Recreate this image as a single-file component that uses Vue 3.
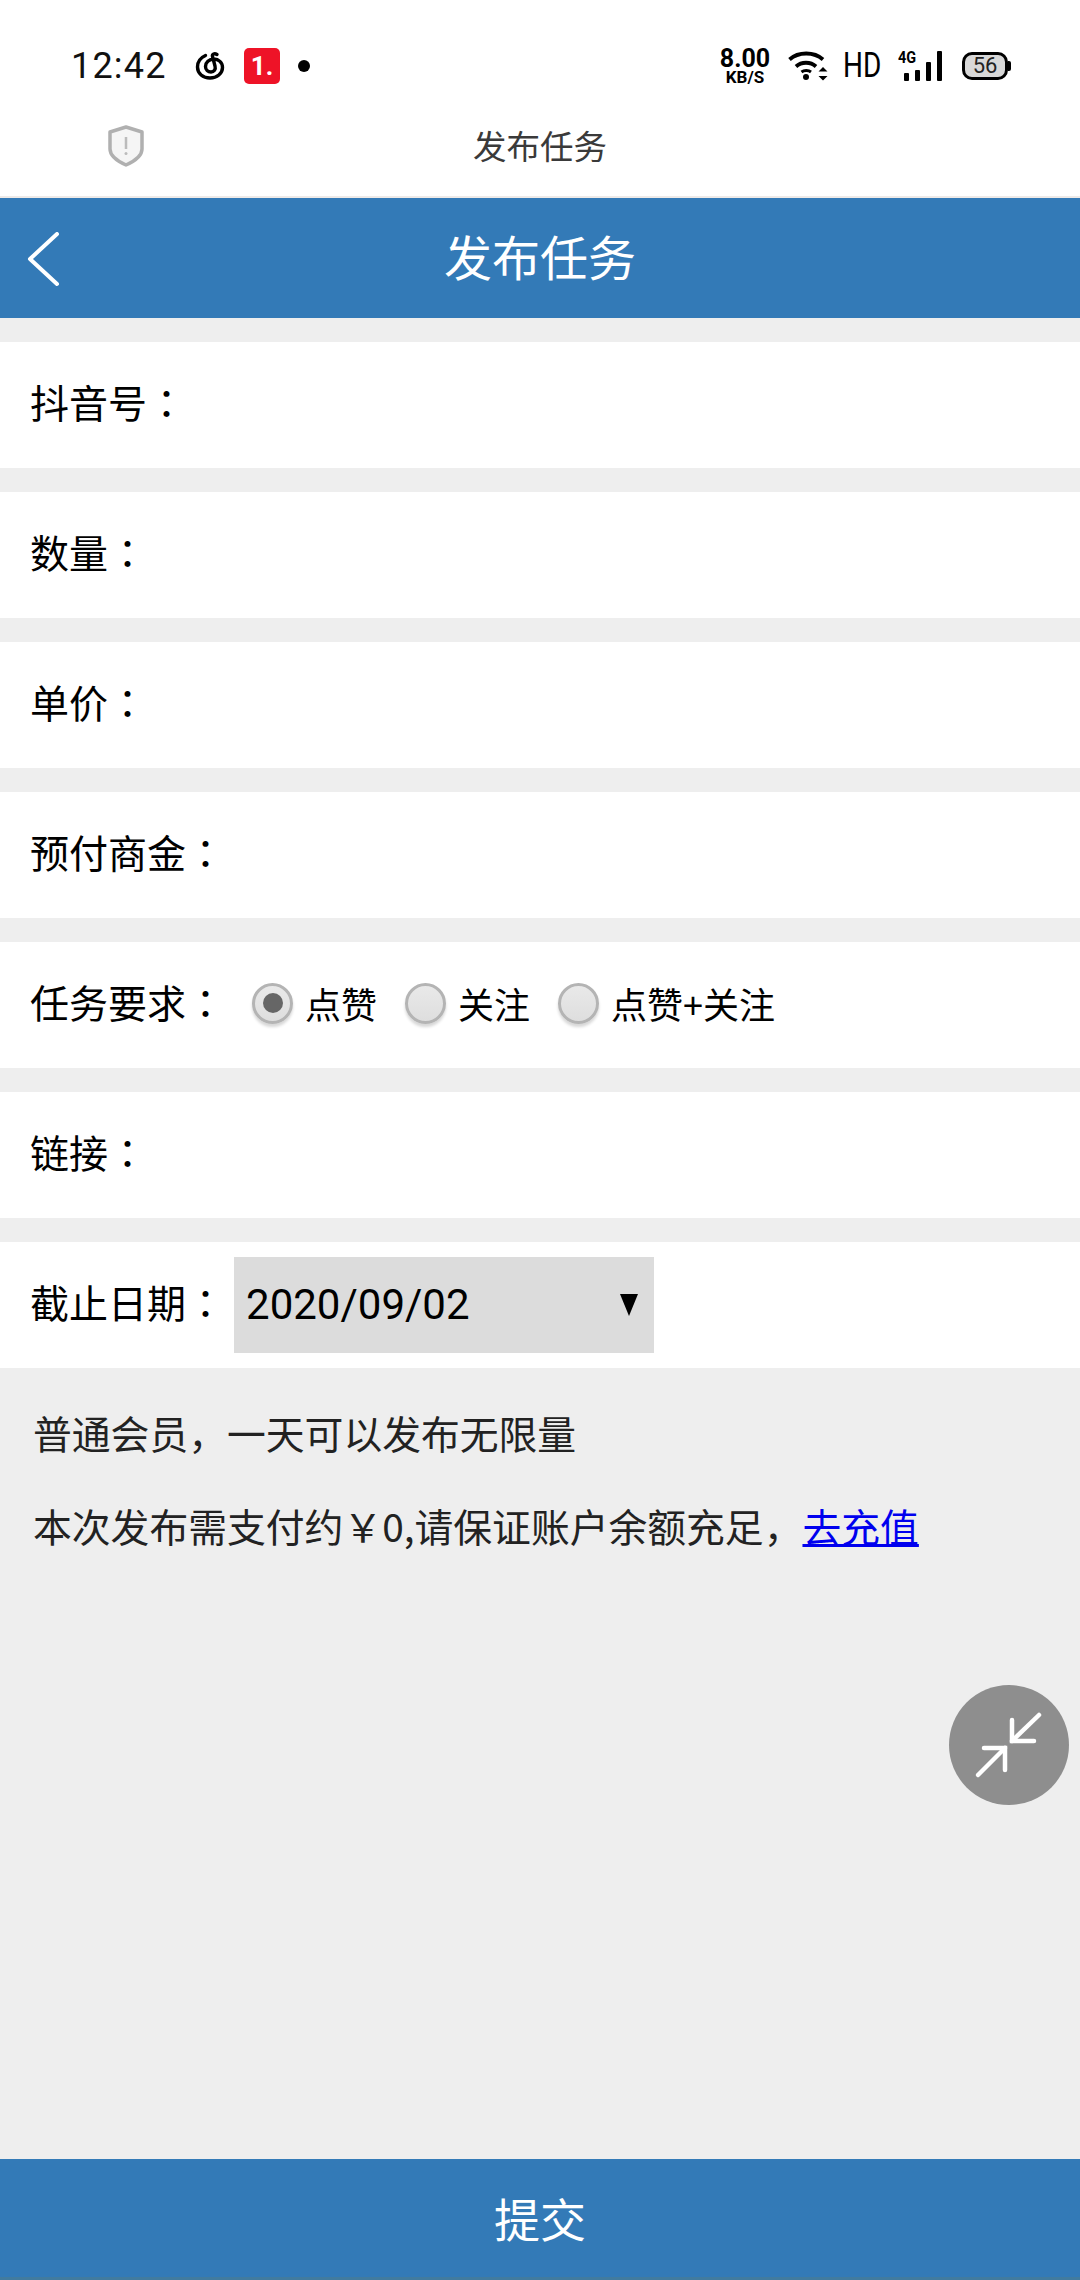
<script setup>
const rowsTop = ['抖音号', '数量', '单价', '预付商金']
const options = [
  { text: '点赞', checked: true },
  { text: '关注', checked: false },
  { text: '点赞+关注', checked: false },
]
</script>

<template>
  <div class="page">
    <div class="status">
      <div class="status-left">
        <span class="time">12:42</span>
        <svg class="note" width="30" height="30" viewBox="0 0 30 30" fill="none" stroke="#000" stroke-width="3.4" stroke-linecap="round">
          <path d="M10.5 4.5C6 6.5 2.5 10.5 2.5 16c0 6.5 5.5 11 12.5 11s12.5-4.500 12.500-10.500c0-5-4-8.500-8.500-8.500-5 0-8.500 3.500-8.500 7.500 0 3.500 2.500 5.500 5.500 5.500s5-2.500 4-6L17.500 5.500c-.6-2.500 2-3.500 4.500-2"/>
        </svg>
        <span class="badge">1.</span>
        <span class="dot"></span>
      </div>
      <div class="status-right">
        <div class="speed"><b>8.00</b><b class="unit">KB/S</b></div>
        <svg class="wifi" width="40" height="30" viewBox="0 0 40 30" fill="none" stroke="#000" stroke-width="3.800">
          <path d="M1.500 8.500C10.500 .5 26 .5 35 8.500"/>
          <path d="M8 15.500C13.500 10.500 22.500 10.500 28 15.500"/>
          <path d="M13.500 21C16 19 20.500 19 23 21" stroke-width="3"/>
          <circle cx="18" cy="26" r="3" fill="#000" stroke="none"/>
          <path d="M30.500 20.500l4.500-4.500 4.500 4.500zM30.500 25h9L35 29.500z" fill="#000" stroke="none"/>
        </svg>
        <span class="hd">HD</span>
        <div class="signal">
          <span class="four-g">4G</span>
          <i class="bar b1"></i><i class="bar b2"></i><i class="bar b3"></i><i class="bar b4"></i>
        </div>
        <div class="battery">
          <span class="battery-num">56</span>
          <i class="battery-tip"></i>
        </div>
      </div>
    </div>

    <div class="webbar">
      <svg class="shield" width="38" height="42" viewBox="0 0 38 42">
        <path d="M19 2l16 5v17c0 7-7 12-16 16C10 36 3 31 3 24V7z" fill="#f5f5f5" stroke="#b0b0b0" stroke-width="3.500" stroke-linejoin="round"/>
        <path d="M19 12v12" stroke="#bbb" stroke-width="2.500"/>
        <circle cx="19" cy="28.500" r="1.500" fill="#bbb"/>
      </svg>
      <span class="webtitle">发布任务</span>
    </div>

    <header class="header">
      <svg class="back" width="36" height="56" viewBox="0 0 36 56" fill="none" stroke="#fff" stroke-width="4" stroke-linecap="round" stroke-linejoin="round">
        <path d="M30 2L3 27l27 25"/>
      </svg>
      <span class="header-title">发布任务</span>
    </header>

    <main class="content">
      <div class="rows">
        <div v-for="row in rowsTop" :key="row" class="row">
          <span class="label">{{ row }}<span class="colon">：</span></span>
        </div>
        <div class="row">
          <span class="label">任务要求<span class="colon">：</span></span>
          <div class="options">
            <div v-for="opt in options" :key="opt.text" class="option">
              <span class="radio" :class="{ checked: opt.checked }"></span>
              <span class="opt-text">{{ opt.text }}</span>
            </div>
          </div>
        </div>
        <div class="row">
          <span class="label">链接<span class="colon">：</span></span>
        </div>
        <div class="row">
          <span class="label">截止日期<span class="colon">：</span></span>
          <div class="select">
            <span class="select-value">2020/09/02</span>
            <span class="select-arrow"></span>
          </div>
        </div>
      </div>

      <div class="info">
        <p>普通会员，一天可以发布无限量</p>
        <p>本次发布需支付约￥0,请保证账户余额充足，<a href="#" class="recharge">去充值</a></p>
      </div>

      <button class="fab" type="button" aria-label="收起">
        <svg width="120" height="120" viewBox="0 0 120 120" fill="none" stroke="#fff" stroke-width="4.500" stroke-linecap="round">
          <path d="M90 30L63 56"/>
          <path d="M63 35v21h22"/>
          <path d="M29 90l27-27"/>
          <path d="M35 63h21v22"/>
        </svg>
      </button>
    </main>

    <button class="submit" type="button"><span class="submit-text">提交</span></button>
  </div>
</template>

<style>
html, body { margin: 0; padding: 0; }
</style>

<style scoped>
.page {
  position: relative;
  width: 1080px;
  height: 2280px;
  display: flex;
  flex-direction: column;
  background: #fff;
  overflow: hidden;
  font-family: "Noto Sans CJK SC", "Noto Sans", sans-serif;
  color: #000;
}
.status {
  height: 124px;
  flex: none;
  display: flex;
  justify-content: space-between;
  align-items: flex-start;
  padding: 43px 72px 0 71px;
  box-sizing: border-box;
}
.status-left { display: flex; align-items: center; height: 46px; }
.time { font: 36px/46px Roboto, sans-serif; letter-spacing: 1.200px; color: #111; width: 124px; }
.badge {
  width: 36px; height: 36px; margin-left: 19px; border-radius: 5px; background: #ee1327; color: #fff;
  font: 700 26px/36px Roboto, sans-serif; text-align: center;
}
.dot { width: 12px; height: 12px; margin-left: 18px; border-radius: 50%; background: #000; }
.status-right { display: flex; align-items: center; height: 46px; }
.speed { display: flex; flex-direction: column; align-items: center; width: 50px; font-family: Roboto, sans-serif; }
.speed b { font-size: 25px; font-weight: 700; line-height: 23px; }
.speed .unit { font-size: 17px; line-height: 15px; }
.wifi { margin-left: 18px; flex: none; }
.hd { margin-left: 15px; width: 38px; font: 400 35px/46px Roboto, sans-serif; transform: scaleX(.8); transform-origin: left center; }
.signal { position: relative; width: 44px; height: 30px; margin-left: 17px; display: flex; align-items: flex-end; gap: 6px; padding-left: 6px; box-sizing: border-box; }
.four-g { position: absolute; left: 0; top: -1px; font: 700 17px/15px Roboto, sans-serif; transform: scaleX(.85); transform-origin: left center; }
.bar { display: block; width: 5px; flex: none; background: #000; border-radius: 1px; }
.b1 { height: 8px; } .b2 { height: 11px; } .b3 { height: 19px; } .b4 { height: 30px; }
.battery {
  position: relative; width: 46px; height: 28px; margin-left: 20px; box-sizing: border-box; border: 3px solid #000; border-radius: 10px; background: #d8d8d8;
  display: flex; align-items: center; justify-content: center;
}
.battery-num { font: 400 22px/22px Roboto, sans-serif; color: #222; }
.battery-tip { position: absolute; right: -6px; top: 6px; width: 3px; height: 10px; background: #000; border-radius: 0 2px 2px 0; }

.webbar {
  height: 74px;
  flex: none;
  position: relative;
  display: flex;
  align-items: center;
  justify-content: center;
  box-sizing: border-box;
  border-bottom: 2px solid #eeeae8;
  padding-bottom: 31px;
}
.shield { position: absolute; left: 107px; top: 1px; }
.webtitle { font-size: 33.500px; line-height: 44px; color: #3a3a3a; }

.header {
  height: 120px;
  flex: none;
  background: #337ab7;
  position: relative;
  display: flex;
  align-items: center;
  justify-content: center;
  box-sizing: border-box;
  padding-bottom: 6px;
}
.back { position: absolute; left: 27px; top: 34px; }
.header-title { color: #fff; font-size: 48px; line-height: 60px; }

.content {
  flex: 1;
  position: relative;
  background: #eee;
  padding-top: 24px;
}
.rows { display: flex; flex-direction: column; gap: 24px; }
.row {
  height: 126px;
  background: #fff;
  display: flex;
  align-items: center;
  padding-left: 30px;
}
.label { font-size: 39px; line-height: 50px; margin-bottom: 9px; }
.colon { font-family: "Noto Sans CJK TC", sans-serif; }
.options { display: flex; align-items: center; margin-left: 27px; margin-bottom: 4px; }
.option { display: flex; align-items: center; margin-right: 28px; }
.radio {
  width: 41px; height: 41px; box-sizing: border-box; border-radius: 50%;
  border: 3px solid #b4b4b4;
  background: linear-gradient(#e9e9e9, #dedede);
  box-shadow: 0 3px 3px rgba(0,0,0,.16);
  display: flex; align-items: center; justify-content: center;
}
.radio.checked::after { content: ""; width: 20px; height: 20px; border-radius: 50%; background: #666; }
.opt-text { font-size: 36px; line-height: 44px; margin-left: 12px; }
.select {
  width: 420px; height: 96px; margin-left: 9px; background: #dcdcdc;
  display: flex; align-items: center; justify-content: space-between;
  padding: 0 14px 0 12px; box-sizing: border-box;
}
.select-value { font: 42px/50px Roboto, sans-serif; }
.select-arrow { width: 0; height: 0; border-left: 9px solid transparent; border-right: 9px solid transparent; border-top: 22px solid #000; margin-right: 2px; }

.info { padding: 41px 33px 0; font-size: 38.800px; line-height: 46px; color: #222; }
.info p { margin: 0 0 47px; white-space: nowrap; }
.recharge { color: #0000ee; text-decoration: underline; }

.fab {
  position: absolute; left: 949px; bottom: 354px; width: 120px; height: 120px;
  border: 0; border-radius: 50%; background: #8e8e8e; padding: 0;
}
.fab svg { display: block; }
.submit {
  flex: none;
  height: 121px;
  border: 0;
  background: #337ab7;
  border-bottom: 3px solid #417b9f;
  color: #fff;
  font: inherit;
  font-size: 46px;
  padding: 0 0 2px;
}
</style>
